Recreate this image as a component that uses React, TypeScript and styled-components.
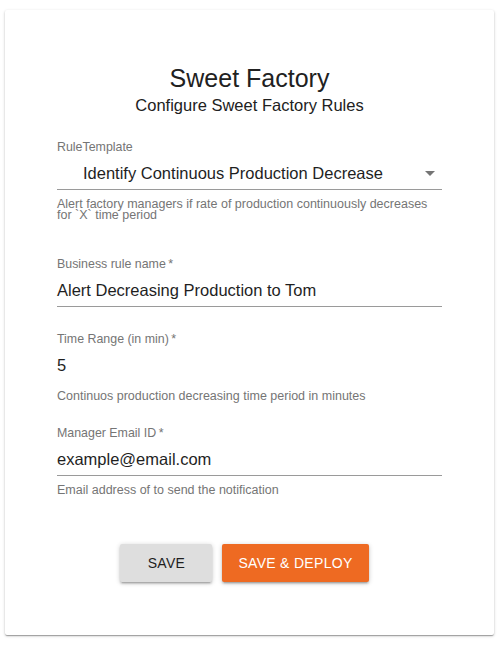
import React from 'react'
import styled, { createGlobalStyle } from 'styled-components'

const GlobalStyle = createGlobalStyle`
  html, body {
    margin: 0;
    padding: 0;
    background: #ffffff;
  }
  body {
    font-family: "Liberation Sans", Arial, Helvetica, sans-serif;
  }
`

const Page = styled.div`
  padding: 10px 7px 12px 5px;
`

const Card = styled.main`
  box-sizing: border-box;
  width: 489px;
  height: 625px;
  padding: 53px 52px 0;
  background: #fff;
  border-radius: 2px;
  box-shadow: 0 1px 3px rgba(0, 0, 0, 0.22), 0 1px 1px rgba(0, 0, 0, 0.16),
    0 2px 1px -1px rgba(0, 0, 0, 0.14);
`

const Title = styled.h1`
  margin: 0;
  font-size: 25px;
  line-height: 30px;
  font-weight: normal;
  text-align: center;
  color: #212121;
`

const Subtitle = styled.h2`
  margin: 2px 0 0;
  font-size: 16.5px;
  line-height: 20px;
  font-weight: normal;
  text-align: center;
  color: #212121;
`

const Field = styled.div<{ $top: number }>`
  margin-top: ${(p) => p.$top}px;
`

const Label = styled.label`
  display: block;
  font-size: 12.4px;
  line-height: 16px;
  color: #757575;
`

const InputRow = styled.div<{ $underline?: boolean; $indent?: number }>`
  display: flex;
  align-items: center;
  padding: 8px 0 6px ${(p) => p.$indent || 0}px;
  font-size: 16.5px;
  line-height: 20px;
  color: #1f1f1f;
  border-bottom: 1px solid ${(p) => (p.$underline ? '#9a9a9a' : 'transparent')};
`

const Value = styled.span`
  flex: 1;
`

const Arrow = styled.svg`
  width: 24px;
  height: 24px;
  margin: -2px 0;
  fill: #757575;
`

const Helper = styled.p`
  margin: 8.5px 0 0;
  padding-right: 4px;
  font-size: 12.5px;
  line-height: 11px;
  color: #757575;
`

const Actions = styled.div`
  display: flex;
  justify-content: center;
  margin-top: 48px;
`

const Button = styled.button<{ $primary?: boolean }>`
  min-width: 92px;
  height: 38px;
  margin-right: 10px;
  padding: 0 16px;
  border: none;
  border-radius: 2px;
  font-family: "Liberation Sans", Arial, sans-serif;
  font-size: 14px;
  letter-spacing: 0.3px;
  text-transform: uppercase;
  background: ${(p) => (p.$primary ? '#ee6a22' : '#dedede')};
  color: ${(p) => (p.$primary ? '#ffffff' : '#1f1f1f')};
  box-shadow: 0 1px 5px rgba(0, 0, 0, 0.2), 0 2px 2px rgba(0, 0, 0, 0.14),
    0 3px 1px -2px rgba(0, 0, 0, 0.12);
`

const App: React.FC = () => {
  return (
    <Page>
      <GlobalStyle />
      <Card>
        <Title>Sweet Factory</Title>
        <Subtitle>Configure Sweet Factory Rules</Subtitle>

        <Field $top={24}>
          <Label>RuleTemplate</Label>
          <InputRow $underline $indent={26}>
            <Value>Identify Continuous Production Decrease</Value>
            <Arrow viewBox="0 0 24 24">
              <path d="M7 10l5 5 5-5z" />
            </Arrow>
          </InputRow>
          <Helper>
            Alert factory managers if rate of production continuously decreases for `X` time period
          </Helper>
        </Field>

        <Field $top={35.5}>
          <Label>Business rule name&thinsp;*</Label>
          <InputRow $underline>
            <Value>Alert Decreasing Production to Tom</Value>
          </InputRow>
        </Field>

        <Field $top={24}>
          <Label>Time Range (in min)&thinsp;*</Label>
          <InputRow>
            <Value>5</Value>
          </InputRow>
          <Helper>Continuos production decreasing time period in minutes</Helper>
        </Field>

        <Field $top={23.5}>
          <Label>Manager Email ID&thinsp;*</Label>
          <InputRow $underline>
            <Value>example@email.com</Value>
          </InputRow>
          <Helper>Email address of to send the notification</Helper>
        </Field>

        <Actions>
          <Button>Save</Button>
          <Button $primary>Save &amp; Deploy</Button>
        </Actions>
      </Card>
    </Page>
  )
}

export default App
